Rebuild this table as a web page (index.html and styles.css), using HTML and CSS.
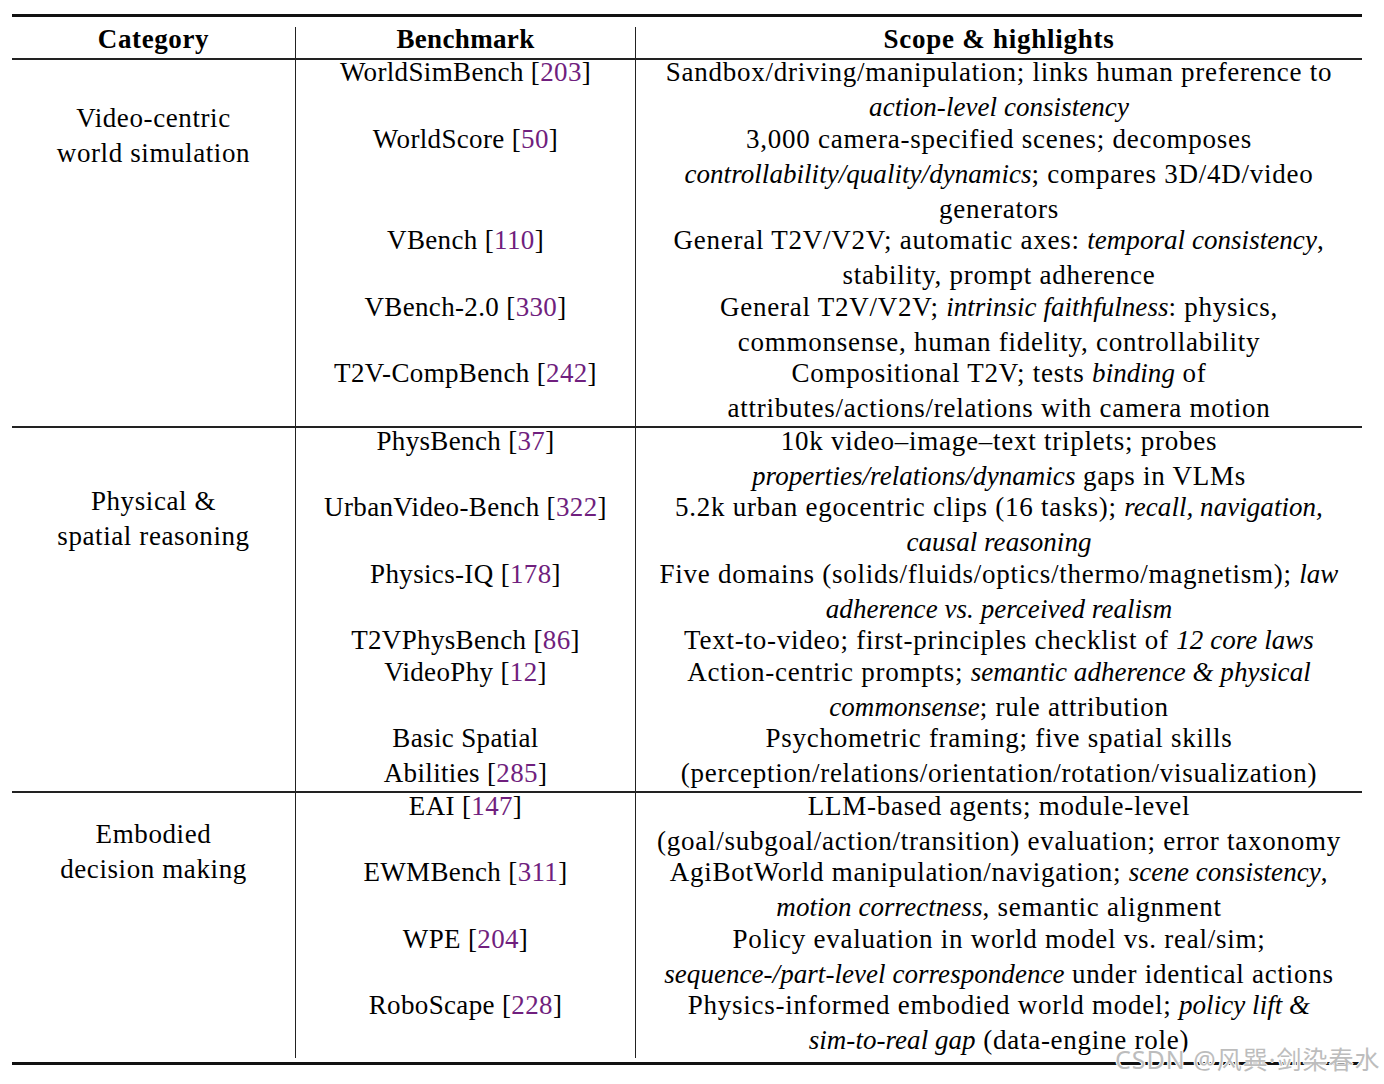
FILE: index.html
```html
<!DOCTYPE html>
<html lang="en">
<head>
<meta charset="utf-8">
<title>Benchmarks table</title>
<link rel="stylesheet" href="styles.css">
</head>
<body>
<div class="table">
  <div class="thead">
    <div class="cat hcell">Category</div>
    <div class="bench hcell">Benchmark</div>
    <div class="scope hcell">Scope &amp; highlights</div>
  </div>

  <div class="section">
    <div class="cat cat-1">Video-centric<br>world simulation</div>
    <div class="rows">
      <div class="row"><div class="bench">WorldSimBench [<span class="ref">203</span>]</div><div class="scope">Sandbox/driving/manipulation; links human preference to<br><i>action-level consistency</i></div></div>
      <div class="row"><div class="bench">WorldScore [<span class="ref">50</span>]</div><div class="scope">3,000 camera-specified scenes; decomposes<br><i>controllability/quality/dynamics</i>; compares 3D/4D/video<br>generators</div></div>
      <div class="row"><div class="bench">VBench [<span class="ref">110</span>]</div><div class="scope">General T2V/V2V; automatic axes: <i>temporal consistency</i>,<br>stability, prompt adherence</div></div>
      <div class="row"><div class="bench">VBench-2.0 [<span class="ref">330</span>]</div><div class="scope">General T2V/V2V; <i>intrinsic faithfulness</i>: physics,<br>commonsense, human fidelity, controllability</div></div>
      <div class="row"><div class="bench">T2V-CompBench [<span class="ref">242</span>]</div><div class="scope">Compositional T2V; tests <i>binding</i> of<br>attributes/actions/relations with camera motion</div></div>
    </div>
  </div>

  <div class="section">
    <div class="cat cat-2">Physical &amp;<br>spatial reasoning</div>
    <div class="rows">
      <div class="row"><div class="bench">PhysBench [<span class="ref">37</span>]</div><div class="scope">10k video–image–text triplets; probes<br><i>properties/relations/dynamics</i> gaps in VLMs</div></div>
      <div class="row"><div class="bench">UrbanVideo-Bench [<span class="ref">322</span>]</div><div class="scope">5.2k urban egocentric clips (16 tasks); <i>recall, navigation,</i><br><i>causal reasoning</i></div></div>
      <div class="row"><div class="bench">Physics-IQ [<span class="ref">178</span>]</div><div class="scope">Five domains (solids/fluids/optics/thermo/magnetism); <i>law</i><br><i>adherence vs. perceived realism</i></div></div>
      <div class="row"><div class="bench">T2VPhysBench [<span class="ref">86</span>]</div><div class="scope">Text-to-video; first-principles checklist of <i>12 core laws</i></div></div>
      <div class="row"><div class="bench">VideoPhy [<span class="ref">12</span>]</div><div class="scope">Action-centric prompts; <i>semantic adherence &amp; physical</i><br><i>commonsense</i>; rule attribution</div></div>
      <div class="row"><div class="bench">Basic Spatial<br>Abilities [<span class="ref">285</span>]</div><div class="scope">Psychometric framing; five spatial skills<br>(perception/relations/orientation/rotation/visualization)</div></div>
    </div>
  </div>

  <div class="section">
    <div class="cat cat-3">Embodied<br>decision making</div>
    <div class="rows">
      <div class="row"><div class="bench">EAI [<span class="ref">147</span>]</div><div class="scope">LLM-based agents; module-level<br>(goal/subgoal/action/transition) evaluation; error taxonomy</div></div>
      <div class="row"><div class="bench">EWMBench [<span class="ref">311</span>]</div><div class="scope">AgiBotWorld manipulation/navigation; <i>scene consistency</i>,<br><i>motion correctness</i>, semantic alignment</div></div>
      <div class="row"><div class="bench">WPE [<span class="ref">204</span>]</div><div class="scope">Policy evaluation in world model vs. real/sim;<br><i>sequence-/part-level correspondence</i> under identical actions</div></div>
      <div class="row"><div class="bench">RoboScape [<span class="ref">228</span>]</div><div class="scope">Physics-informed embodied world model; <i>policy lift &amp;</i><br><i>sim-to-real gap</i> (data-engine role)</div></div>
    </div>
  </div>
</div>
<div class="watermark">CSDN @风巽·剑染春水</div>
</body>
</html>
```

FILE: styles.css
```css
html, body {
  margin: 0;
  padding: 0;
  background: #ffffff;
}

body {
  font-family: "Liberation Serif", "Times New Roman", serif;
  font-size: 27px;
  color: #000;
  position: relative;
  width: 1384px;
  height: 1084px;
  overflow: hidden;
}

.table {
  margin: 14px 0 0 12px;
  width: 1350px;
  border-top: 3px solid #111;
  border-bottom: 3px solid #111;
  padding-bottom: 4px;
}

.thead {
  display: flex;
  padding-top: 10px;
  border-bottom: 2px solid #222;
}

.hcell {
  font-weight: bold;
  letter-spacing: 0.8px;
  line-height: 25px;
  padding-bottom: 6px;
}

.cat {
  width: 283px;
  flex: none;
  text-align: center;
  letter-spacing: 0.6px;
  border-right: 1px solid #222;
}

.bench {
  width: 339px;
  flex: none;
  text-align: center;
  letter-spacing: 0.35px;
  border-right: 1px solid #222;
}

.scope {
  flex: 1;
  text-align: center;
  white-space: nowrap;
  letter-spacing: 0.75px;
}

.scope i {
  letter-spacing: 0.05px;
}

.section {
  display: flex;
  line-height: 35px;
}

.section + .section {
  border-top: 2px solid #222;
}

.cat-1 { padding-top: 41px; }
.cat-2 { padding-top: 56px; }
.cat-3 { padding-top: 24px; }

.rows {
  flex: 1;
  display: flex;
  flex-direction: column;
}

.row {
  display: flex;
  margin-top: -3.5px;
}

.row:first-child {
  margin-top: -4.6px;
}

.ref {
  color: #701f7e;
}

.watermark {
  position: absolute;
  left: 1115px;
  top: 1044px;
  font-family: "Noto Sans", "Noto Sans CJK SC", sans-serif;
  font-size: 25px;
  line-height: 30px;
  letter-spacing: 1px;
  color: #bdbdbd;
  white-space: nowrap;
  text-shadow: 1px 0 0 #fff, -1px 0 0 #fff, 0 1px 0 #fff, 0 -1px 0 #fff;
}
```
